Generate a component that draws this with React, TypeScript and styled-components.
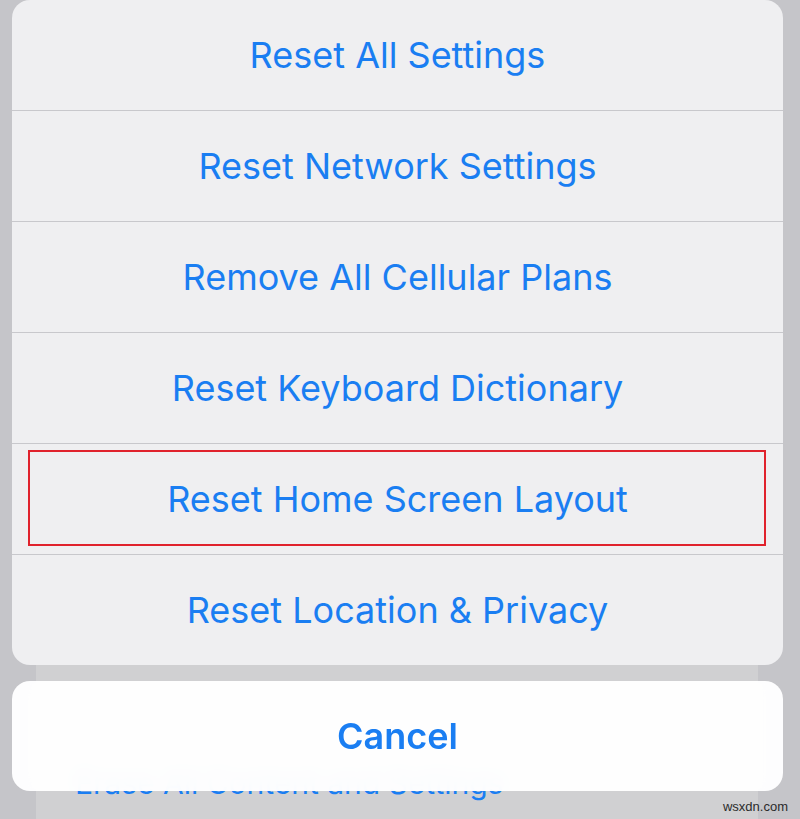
import styled, { createGlobalStyle } from 'styled-components';

const Global = createGlobalStyle`
  html, body {
    margin: 0;
    padding: 0;
    background: #c5c5c9;
  }
  * {
    box-sizing: border-box;
  }
`;

const Screen = styled.main`
  position: relative;
  width: 800px;
  height: 819px;
  overflow: hidden;
  background: #c5c5c9;
  font-family: Inter, 'Liberation Sans', sans-serif;
`;

const BackSheet = styled.section`
  position: absolute;
  top: 0;
  bottom: 0;
  left: 36px;
  right: 42px;
  display: flex;
  flex-direction: column;
  justify-content: flex-end;
  padding: 0 0 18px 39px;
  background: #d0d0d2;
`;

const BackLabel = styled.div`
  color: #1a7ef2;
  font-size: 30px;
  line-height: 36px;
`;

const Sheet = styled.div`
  position: absolute;
  inset: 0;
  display: flex;
  flex-direction: column;
  gap: 16px;
  padding: 0 17px 0 12px;
`;

const Group = styled.div`
  display: flex;
  flex-direction: column;
  border-radius: 18px;
  overflow: hidden;
  background: #efeff1;
`;

const Action = styled.div<{ $last?: boolean }>`
  position: relative;
  height: ${(p) => (p.$last ? '110px' : '111px')};
  display: flex;
  align-items: center;
  justify-content: center;
  padding-bottom: ${(p) => (p.$last ? '0' : '1px')};
  border-bottom: ${(p) => (p.$last ? 'none' : '1px solid #c8c8cc')};
  color: #1a7ef2;
  font-size: 36px;
`;

const Highlight = styled.span`
  position: absolute;
  left: 16px;
  right: 17px;
  top: 6px;
  bottom: 8px;
  border: 2px solid #e0222c;
`;

const CancelButton = styled.div`
  height: 110px;
  display: flex;
  align-items: center;
  justify-content: center;
  border-radius: 18px;
  background: rgba(255, 255, 255, 0.97);
  backdrop-filter: blur(8px);
  color: #1a7ef2;
  font-size: 36px;
  font-weight: 600;
`;

const Watermark = styled.span`
  position: absolute;
  right: 12px;
  bottom: 5px;
  color: #2b2b2b;
  font-family: 'Liberation Sans', Arial, sans-serif;
  font-size: 13px;
`;

const actions = [
  'Reset All Settings',
  'Reset Network Settings',
  'Remove All Cellular Plans',
  'Reset Keyboard Dictionary',
  'Reset Home Screen Layout',
  'Reset Location & Privacy',
];

const App = () => {
  return (
    <>
      <Global />
      <Screen>
        <BackSheet>
          <BackLabel>Erase All Content and Settings</BackLabel>
        </BackSheet>
        <Sheet>
          <Group>
            {actions.map((label, i) => (
              <Action key={label} $last={i === actions.length - 1}>
                {label}
                {i === 4 && <Highlight />}
              </Action>
            ))}
          </Group>
          <CancelButton>Cancel</CancelButton>
        </Sheet>
        <Watermark>wsxdn.com</Watermark>
      </Screen>
    </>
  );
};

export default App;
